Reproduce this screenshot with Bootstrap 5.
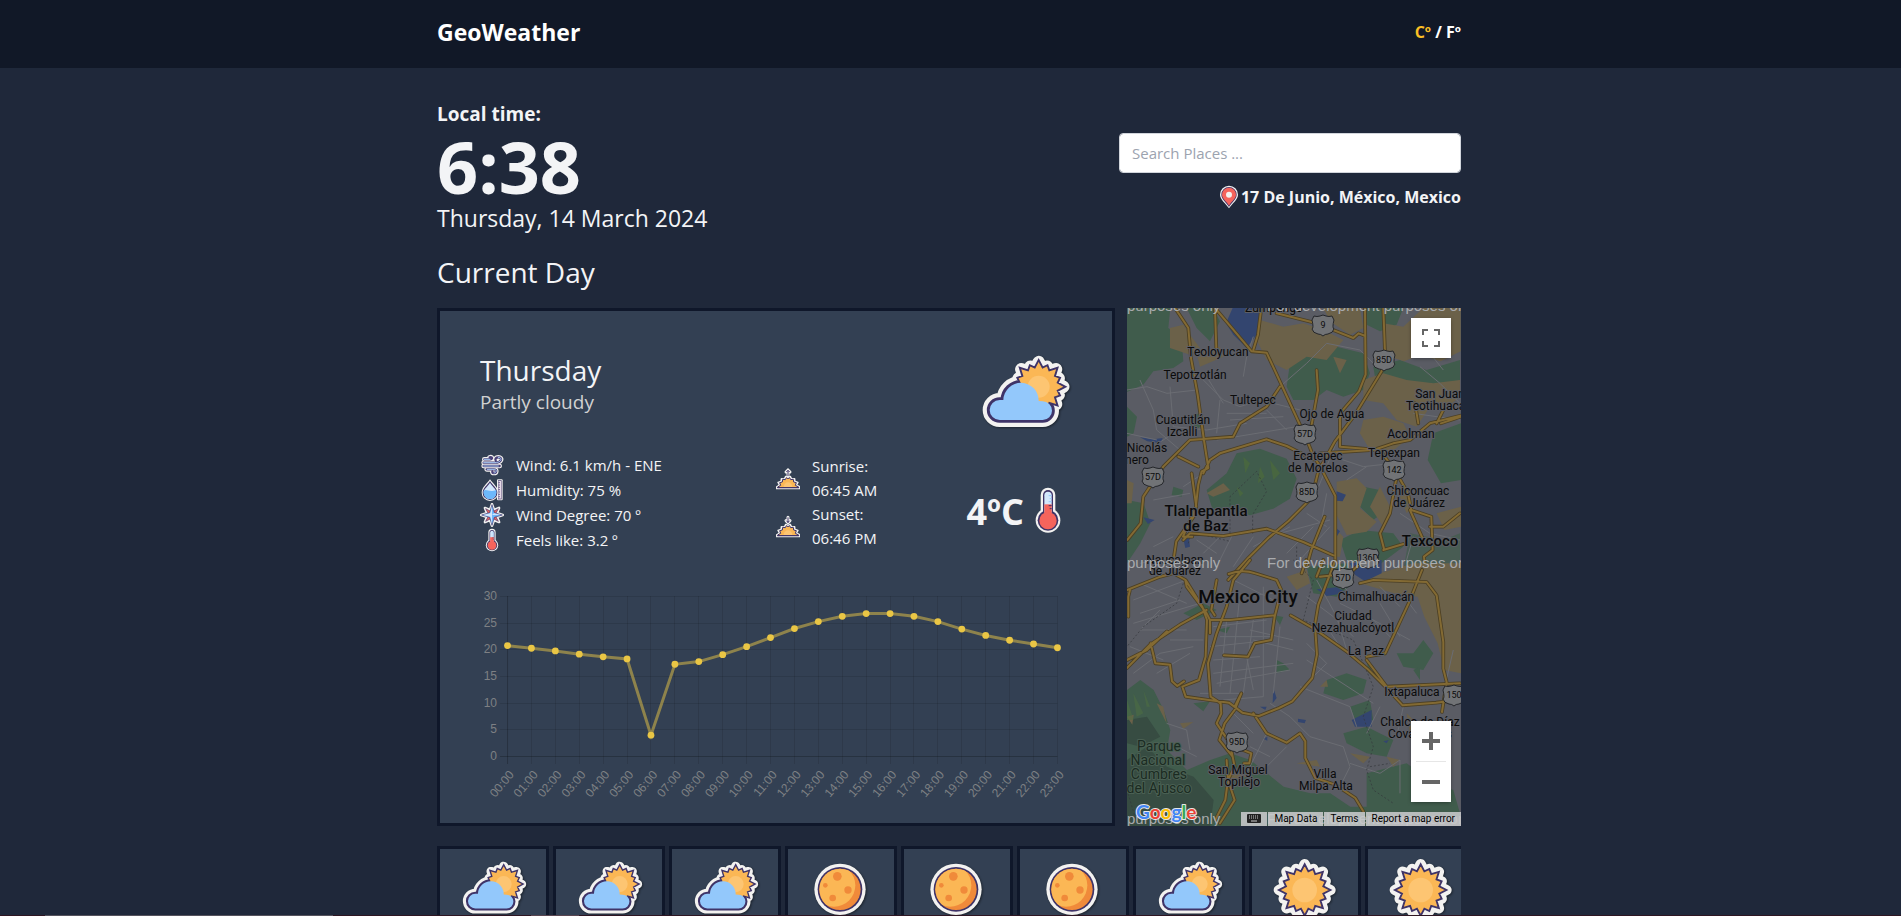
<!DOCTYPE html>
<html lang="en">
<head>
<meta charset="utf-8">
<meta name="viewport" content="width=device-width, initial-scale=1">
<title>GeoWeather</title>
<link href="https://cdn.jsdelivr.net/npm/bootstrap@5.3.0/dist/css/bootstrap.min.css" rel="stylesheet">
<style>
:root{--ink:#0f172a;--panel:#334053;--page:#1f283a;--snow:#f3f4f6}
html{scrollbar-width:none}
body{font-family:"Open Sans","Noto Sans",sans-serif;background:var(--page);color:var(--snow);line-height:24px;padding-right:3px;overflow-x:hidden}
.topbar{background:#111827;height:68px;margin-right:-3px;padding-right:3px}
.wrap{max-width:1024px;margin:0 auto}
.brand{font-size:23px;font-weight:700;color:#fff;text-decoration:none}
.unit{background:none;border:0;padding:0;color:#fff;font-weight:700;font-size:16px}
.unit.on{color:#fbbf24}
.lbl{font-size:19px;font-weight:700;line-height:28px;margin-bottom:2px}
.clock{font-size:72px;font-weight:700;line-height:72px}
.date{font-size:23px;line-height:32px}
.sec{font-size:28px;line-height:36px;font-weight:400;padding-bottom:2px}
.finder{flex:0 0 33.4%}
.finder .form-control{height:40px;border-radius:4px;border:1px solid #d1d5db;padding:8px 12px;font-size:15px}
.finder .form-control::placeholder{color:#9ca3af}
.place{font-weight:700;font-size:16px}
.i24{width:24px;height:24px;flex:none}
.main-grid{display:grid;grid-template-columns:67fr 33fr;gap:12px}
.panel{background:var(--panel);border:3px solid var(--ink)}
.today{padding:33px 40px 22px}
.today h2{font-size:28px;line-height:36px;font-weight:400;margin:0}
.sub{font-size:19px;line-height:28px;color:#d1d1d1}
.facts{font-size:15px;margin-top:12px}
.facts li{height:25px}
.temp{font-size:36px;font-weight:700}
.i48{width:48px;height:48px}
.i96{width:96px;height:96px}
.i70{width:70px;height:70px}
.stick{filter:drop-shadow(1px 1px 1px rgba(0,0,0,.45))}
.chart text{font:12px "Liberation Sans",Arial,sans-serif;fill:#7e8084}
.mapbox{min-height:518px}
.mapbox>svg{position:absolute;inset:0;width:100%;height:100%}
.mapbox text{font-family:Roboto,sans-serif;font-size:12px;fill:#0b0b0b;text-anchor:middle;paint-order:stroke;stroke:#5c5e66;stroke-width:2px;stroke-linejoin:round}
.mapbox text.big{font-size:15px;font-weight:500}
.mapbox text.city{font-size:19px;font-weight:500}
.mapbox text.park{font-size:14px;fill:#1b2b22;stroke:#4a6053}
.mapbox text.wm{font-family:"Liberation Sans",Arial,sans-serif;font-size:15px;fill:#a9abae;stroke:none;text-anchor:start}
.mapbox text.shd{font-size:9px;stroke:none}
.mapbox text.glogo{font-family:Lato,sans-serif;font-size:19px;font-weight:700;stroke:#e8e8e8;text-anchor:start}
.mapbtn{background:#fff;border:0;width:40px;height:40px;padding:0;display:flex;align-items:center;justify-content:center}
.shade{box-shadow:0 1px 4px -1px rgba(0,0,0,.5);border-radius:2px;background:#fff}
.ctl{margin:10px}
.ctl-zoom{margin:0 10px 24px}
.rule{width:30px;height:1px;background:#e6e6e6}
.attr{font:10px/14px Roboto,sans-serif;gap:1px}
.attr a,.attr button{background:rgba(200,202,204,.88);color:#000;text-decoration:none;border:0;padding:0 6px;height:14px}
.days{display:flex;gap:4px;overflow:hidden}
.day{flex:0 0 112px;padding:4px 0 12px;text-align:center}
.dock{height:1px;background:linear-gradient(90deg,#2f1622 45px,#55525c 45px 333px,#2f1622 333px 531px,#5a4650 531px 579px,#2f1622 579px)}
</style>
</head>
<body>
<svg width="0" height="0" class="position-absolute" aria-hidden="true">
<defs>
<path id="cloudShape" d="M721 270A30 30 0 0 1 721 210L732 210A53 53 0 0 1 838 213L850 214A28 28 0 0 1 850 270Z"/>
<path id="sunShape"/>
<symbol id="partly" viewBox="650 42 288 288">
 <g stroke="#f3f2f0" stroke-width="42" stroke-linejoin="round" fill="#f3f2f0"><use href="#cloudShape"/><use href="#sunShape" transform="translate(838 170) scale(.88)"/></g>
 <g stroke="#3f3468" stroke-width="17"><use href="#cloudShape"/><use href="#sunShape" transform="translate(838 170) scale(.88)" stroke-width="13"/></g>
 <use href="#sunShape" transform="translate(838 170) scale(.88)" fill="#fbb755"/><circle cx="838" cy="170" r="33" fill="#fdc572"/>
 <use href="#cloudShape" fill="#93c8fb"/>
</symbol>
<symbol id="sun" viewBox="0 0 210 210">
 <use href="#sunShape" transform="translate(104 111) scale(.92)" fill="#f3f2f0" stroke="#f3f2f0" stroke-width="34" stroke-linejoin="round"/>
 <use href="#sunShape" transform="translate(104 111) scale(.92)" fill="#fbb755" stroke="#3f3468" stroke-width="6"/>
 <circle cx="104" cy="111" r="37" fill="#fdc572"/>
</symbol>
<clipPath id="moonClip"><circle cx="102" cy="109" r="62"/></clipPath>
<symbol id="moon" viewBox="0 0 210 210">
 <circle cx="102" cy="109" r="77" fill="#f3f2f0"/><circle cx="102" cy="109" r="67" fill="#3f3468"/><circle cx="102" cy="109" r="62" fill="#f08a3a"/>
 <circle cx="84" cy="97" r="64" fill="#fbb755" clip-path="url(#moonClip)"/>
 <g fill="#f08a3a"><circle cx="94" cy="70" r="13"/><circle cx="58" cy="97" r="7"/><circle cx="126" cy="111" r="11"/><circle cx="80" cy="135" r="10"/></g>
</symbol>
<symbol id="thermo" viewBox="792 469 144 144">
 <g fill="#f3f2f0"><circle cx="864" cy="572" r="37"/><rect x="842" y="474" width="44" height="90" rx="22"/></g>
 <g fill="#3f3468"><circle cx="864" cy="572" r="31"/><rect x="849" y="481" width="30" height="80" rx="15"/></g>
 <rect x="853" y="486" width="22" height="70" rx="11" fill="#d3e7fb"/>
 <path d="M853 524h22v26h-22z" fill="#f5645c"/><circle cx="864" cy="573" r="26" fill="#f5645c"/>
 <path d="M866 498h9M869 507h6M866 516h9" stroke="#93c8fb" stroke-width="3"/><path d="M866 528h9M869 537h6" stroke="#3f3468" stroke-width="3"/>
</symbol>
<symbol id="pin" viewBox="481 553 72 72">
 <path d="M517 623C508 609 490 597 490 582a27 27 0 0 1 54 0C544 597 526 609 517 623Z" fill="#f3f2f0"/>
 <path d="M517 619C510 606 494 596 494 582a23 23 0 0 1 46 0C540 596 524 606 517 619Z" fill="#3f3468"/>
 <path d="M517 615C512 604 496 594 496 582a21 21 0 0 1 42 0C538 594 522 604 517 615Z" fill="#f5645c"/>
 <circle cx="517" cy="582" r="9" fill="#f3f2f0"/>
</symbol>
<symbol id="wind" viewBox="150 459 72 72">
 <g fill="none" stroke-linecap="round" stroke-linejoin="round">
 <g stroke="#f3f2f0" stroke-width="14"><path d="M161 488h34c20 0 24-16 10-16-8 0-10 5-8 9M163 478h17c9 0 7-9-1-6M161 498h48M170 508h22c10 0 8 11 0 11-3 0-5-2-5-4"/></g>
 <g stroke="#4a4076" stroke-width="7"><path d="M161 488h34c20 0 24-16 10-16-8 0-10 5-8 9M163 478h17c9 0 7-9-1-6M161 498h48M170 508h22c10 0 8 11 0 11-3 0-5-2-5-4"/></g>
 <g stroke="#a9cdf8" stroke-width="3"><path d="M161 488h34c20 0 24-16 10-16M163 478h17M161 498h44M172 508h20c10 0 8 11 0 11"/></g></g>
</symbol>
<symbol id="humid" viewBox="150 536 72 72">
 <rect x="201" y="540" width="17" height="63" rx="3" fill="#f3f2f0"/><rect x="204" y="543" width="11" height="57" fill="#3f3468"/><path d="M205 545h9v53h-9z" fill="#e6d9e8"/><path d="M205 550h5M205 557h5M205 564h5M205 571h5M205 578h5M205 585h5M205 592h5" stroke="#3f3468" stroke-width="2"/>
 <path d="M180 540C172 552 155 564 155 580a25 25 0 0 0 50 0C205 564 188 552 180 540Z" fill="#f3f2f0"/>
 <path d="M180 545C173 556 158 567 158 580a22 22 0 0 0 44 0C202 567 187 556 180 545Z" fill="#3f3468"/>
 <path d="M180 550C174 560 161 569 161 580a19 19 0 0 0 38 0C199 569 186 560 180 550Z" fill="#d3e7fb"/>
 <path d="M161 574c10-6 16 6 38-2v8a19 19 0 0 1-38 0Z" fill="#6db8fb"/>
</symbol>
<symbol id="compass" viewBox="150 610 72 72">
 <g stroke-linejoin="round"><path d="M165 625l15 6 6-17 6 17 15-6-6 15 17 6-17 6 6 15-15-6-6 17-6-17-15 6 6-15-17-6 17-6Z" fill="#f3f2f0" stroke="#f3f2f0" stroke-width="8"/>
 <path d="M167 627l15 8h8l15-8-8 15v8l8 15-15-8h-8l-15 8 8-15v-8Z" fill="#f5645c" stroke="#3f3468" stroke-width="2"/>
 <path d="M186 615l7 24 24 7-24 7-7 24-7-24-24-7 24-7Z" fill="#6db8fb" stroke="#3f3468" stroke-width="2"/><path d="M186 619v54l-5-22-22-5 22-5ZM186 646h27l-21-5Z" fill="#d3e7fb"/></g>
</symbol>
<g id="horizon">
 <path d="M50 474l9-6-4-8 9-3 1-8 9 1 4-8 7 4 7-4 4 8 9-1 1 8 9 3-4 8 11 6v5H50Z" fill="#f3f2f0" stroke="#f3f2f0" stroke-width="4" stroke-linejoin="round"/>
 <path d="M54 474l9-5-3-8 8-2 1-8 8 1 3-6 5 3 5-3 3 6 8-1 1 8 8 2-3 8 10 5v2H54Z" fill="#fbb755" stroke="#3f3468" stroke-width="3" stroke-linejoin="round"/>
 <path d="M72 474a13 14 0 0 1 26 0Z" fill="#fdc572"/><path d="M53 476h65" stroke="#3f3468" stroke-width="3"/>
</g>
<symbol id="sunrise" viewBox="49 411 72 72"><use href="#horizon"/><path d="M85 441v-17M79 429l6-6 6 6" fill="none" stroke="#f3f2f0" stroke-width="9" stroke-linecap="round"/><path d="M85 441v-17M80 429l5-5 5 5" fill="none" stroke="#3f3468" stroke-width="3"/></symbol>
<symbol id="sunset" viewBox="49 411 72 72"><use href="#horizon"/><path d="M85 438v-17M79 431l6 6 6-6" fill="none" stroke="#f3f2f0" stroke-width="9" stroke-linecap="round"/><path d="M85 438v-17M80 431l5 5 5-5" fill="none" stroke="#3f3468" stroke-width="3"/></symbol>
<path id="shield" d="M-9-9q3 1 6 0l3-1 3 1q3 1 6 0l2 4q-2 8 0 9-1 4-6 5-3 0-5 2-2-2-5-2-5-1-6-5 2-1 0-9Z" fill="#717376" stroke="#24262a" stroke-width="1"/>
</defs>
</svg>

<nav class="topbar navbar py-0">
 <div class="wrap w-100 d-flex justify-content-between align-items-center pb-1">
  <a class="brand" href="#">GeoWeather</a>
  <div class="fw-bold text-white"><button class="unit on" type="button">Cº</button> / <button class="unit" type="button">Fº</button></div>
 </div>
</nav>

<main class="wrap">
 <header class="d-flex justify-content-between pt-4">
  <div class="mt-2">
   <div class="lbl">Local time:</div>
   <div class="clock">6:38</div>
   <div class="date">Thursday, 14 March 2024</div>
  </div>
  <div class="finder d-flex flex-column justify-content-center pt-3">
   <label class="visually-hidden" for="q">Search places</label>
   <input id="q" class="form-control" type="text" placeholder="Search Places ...">
   <div class="place d-flex justify-content-end align-items-center mt-2 pt-1"><svg class="i24"><use href="#pin"/></svg><span>17 De Junio, México, Mexico</span></div>
  </div>
 </header>
 <h1 class="sec mt-3 mb-3 pt-1">Current Day</h1>

 <div class="main-grid">
  <section class="panel today">
   <div class="d-flex justify-content-between align-items-center">
    <div class="pb-3"><h2>Thursday</h2><div class="sub">Partly cloudy</div></div>
    <svg class="i96 stick"><use href="#partly"/></svg>
   </div>
   <div class="row g-0 align-items-center facts">
    <div class="col-6">
     <ul class="list-unstyled m-0">
      <li class="d-flex align-items-center"><svg class="i24 me-2"><use href="#wind"/></svg><span class="ms-1">Wind: 6.1 km/h - ENE</span></li>
      <li class="d-flex align-items-center"><svg class="i24 me-2"><use href="#humid"/></svg><span class="ms-1">Humidity: 75 %</span></li>
      <li class="d-flex align-items-center"><svg class="i24 me-2"><use href="#compass"/></svg><span class="ms-1">Wind Degree: 70 º</span></li>
      <li class="d-flex align-items-center"><svg class="i24 me-2"><use href="#thermo"/></svg><span class="ms-1">Feels like: 3.2 º</span></li>
     </ul>
    </div>
    <div class="col-6 d-flex justify-content-between align-items-center">
     <div>
      <div class="d-flex align-items-center"><svg class="i24 me-2"><use href="#sunrise"/></svg><div class="ms-1">Sunrise:<br>06:45 AM</div></div>
      <div class="d-flex align-items-center"><svg class="i24 me-2"><use href="#sunset"/></svg><div class="ms-1">Sunset:<br>06:46 PM</div></div>
     </div>
     <div class="temp d-flex align-items-center pt-3"><span class="pt-1">4ºC</span><svg class="i48"><use href="#thermo"/></svg></div>
    </div>
   </div>
   <svg class="chart d-block w-100 mt-4" viewBox="0 0 592 224" role="img" aria-label="Temperature by hour" id="chart"></svg>
  </section>

  <section class="mapbox position-relative overflow-hidden">
   <svg viewBox="0 0 334 518" preserveAspectRatio="xMidYMid slice">
    <rect width="334" height="518" fill="#5a5c64"/>
    <!-- northern half -->
    <g transform="translate(-7 -8) scale(.33333)">
     <g fill="#405c4c">
      <path d="M21 24h130l-6 60 40 30 5 70-30 20-60 10-30 40-49 22Z"/><path d="M200 24h80l20 40-30 60-40-40Z"/><path d="M510 190l60-30 50 10 30-30 80 20 20 60-20 50-60 20-50-20-40 30-60 0-20-40Z"/><path d="M740 24h110l-20 50-50 20-40-20Z"/>
      <path d="M760 200l80-20 80 30 100-30v60l-60 20-60-10-60 30-70-20Z"/><path d="M940 400l83-30v170l-60 10-40-70Z"/><path d="M260 570l60-50 30-60 70-14 80 30 30 60-20 60-50 30-70 20-60-20-50 10Z"/>
      <path d="M21 600l50 10 20 60-30 60-40 60Z"/><path d="M21 320l30 30-10 50-20 10Z"/><path d="M730 560l50 10 20 60-40 30-40-40ZM660 720l60-30 100 10 30 40-80 60-90-20Z"/><path d="M200 350l40-10 10 30-30 30ZM160 560l30 10-5 20-30-5Z"/><path d="M870 700l100 20 50-20v110H850Z" opacity=".7"/>
     </g>
     <g fill="#6b6149">
      <path d="M150 84l40-10 20 30 30 40-30 20-60-20Z"/><path d="M420 60l70 20 60-10 60 20 60 30-50 60-60-10-60 40-60-30-30-60Z"/><path d="M610 24h110l10 60-40 20-60-40Z"/><path d="M790 70l60 10 60-56h112v130l-60 30-60-20-50 20-60-20Z"/><path d="M730 240l60-20 70 20 80 10 80-10v50l-50 40-40-10-40 60-60-20-40-50-60-10Z"/>
      <path d="M730 360l60-10 60 20 20 40-60 50-60-10-30-50Z"/><path d="M650 545l60-10 30 30-20 60 50 40-30 30-60 10-30-60Z"/><path d="M780 560l30 60-20 60-40-60ZM650 690l20 20-10 60-15 0ZM640 170l40 10-20 40ZM230 160l70-20 10 30-70 30ZM260 580l50-30 20 20-50 20ZM21 540l20 10-6 60-14 0Z"/><path d="M860 560l20 60-20 20-20-50ZM950 640l73-20v60l-50 10Z"/>
     </g>
     <path d="M318 70l20-46h86l-14 80-30 40-40-40Z" fill="#33456f"/><g fill="#33456f"><path d="M60 412l40 6 28-4-6 16-40-6ZM70 652l34 8-20 12ZM190 716l16-6 4 30-14 4ZM650 574l28 10-10 20-20-2ZM648 684l12 10-10 16Z"/></g>
     <path d="M370 470l20 20-14 30ZM420 500l14 30-20 20ZM450 480l30 40-20 20ZM350 560l20 20-10 10Z" fill="#486640"/>
     <path fill="none" stroke="#6a6c72" stroke-width="3" d="M21 270l60-10 60 20 90-10M250 240l60 60 50 20 60-20 120 30M370 230l10-60 20-60M480 260l80-70 60-60 100 20 60 60M60 240l40 90 10 60 70 60M150 260l10 120 100 10 120-20M300 300l-10 100M330 360l160-10M440 330l60 60M290 420l240-40M320 340h120M260 230l50 80M100 440l60-40M21 400l90 20M190 560l60-40M100 600l110-20M640 470l90 30 90-10M680 540l60-40M660 400l-80 200M620 580l-20 110M560 640l60 40M480 700l150-40M500 760l80-80M540 780l90-100M400 740l110-60M250 760l60-60M300 780l40-80M340 800l60-90M230 720l60 40M100 740l60-30M60 790l100-20M900 200l60 50 60 60M880 340l140 20M840 640l90 60 90 20M860 780l20-70M930 160l40 50"/>
     <path d="M330 700v-110l80-76 30 60-42 70v60M205 730l10-34 115 28M530 740v60" fill="none" stroke="#33363b" stroke-width="2" stroke-dasharray="6 6"/>
     <g fill="none" stroke-linejoin="round" stroke-linecap="round">
      <path id="rn" stroke="#4b3f24" stroke-width="11" d="M165 24l40 60 8 90 20 110 18 130 14 90-20 10-10 40-10 90-56 80-10 66M215 520l14 100-40 90 28 0M285 24l110 130 45 4 60 130 60 130 20 50 20 30 46 90v210M285 24l4 120M424 24l-10 80-14 46M470 40l120 30 110 44 16-14 20 8M735 24l2 200-20 50-60 70M790 24l5 130-10 60-80 130-60 80-50 90-20 80-70 70-60 50-60 60-60 66M590 210l4 60-20 110M480 260l-40 60-80 50-20 40-130 10-80 80-60 90-8 80-40 50M175 470l60 30M250 520l20-40 30-20 140-42 60 20 80 40M660 350v90l120 10 50 70 34 60 10 50 60 20 4 100-26 20 6 60M600 460l160-10 60-20 50-10 60-50 96-24M830 530l-20 110-30 60 12 46M870 630l40 90M930 680l40 0 50-40M790 750l60-18M190 720l20-20 100 8 130-22 110 40 90 40M614 650l-40 100-14 50M885 310l10 60M970 330l-20 40M1023 350l-60 20"/>
     </g>
    </g>
    <!-- southern half -->
    <g transform="translate(-7 252) scale(.33333)">
     <g fill="#405c4c">
      <path d="M21 390l40-30 40 30 30 60 20 60-10 60 60 60 70-30 60-20 60 20 100 80 80 20 60 0 60 40 70 0 60 58H21Z"/><path d="M620 360l60-20 60 20-10 40-60 20-60-20Z"/><path d="M690 440l60-20 10 60-50 10Z"/><path d="M670 520l70-20 80 40-20 50-60-10-60-30Z"/><path d="M830 280l50 0 30-40 30 40-30 50-60-10Z"/><path d="M560 20l120-10 20 60-50 40-70-10ZM190 160l60-30 40 20-60 30ZM470 300l20 10 20 20-40 10ZM220 430l50-6-20 30ZM290 210l40-10-10 20ZM740 640l120-30 80 60 60 20 23 80H740ZM460 165l30 6-10 24ZM740 300l20 20-14 20ZM880 330l20-10 0 40Z"/>
     </g>
     <path d="M21 600l60-40 60 60 80 30 60 70-10 78H21ZM21 480l60-10 40 60-60 30-40-10Z" fill="#374c42"/>
     <g fill="#6b6149"><path d="M720 70l60-30 100-30h143v330l-50-10-20-80-40-80-20-60-70-10Z"/><path d="M110 430l20 10 10 50-20-40ZM180 490l40-4-30 20ZM800 590l40 10-20 20ZM690 580l60 10-20 20ZM600 380l20-20 4 20ZM500 50l60-20 10 40-40 20ZM310 650l60-20 10 20-60 20ZM21 470l20-6-4 30ZM860 460l20 20-10 40ZM530 610l60-10 10 20Z"/></g>
     <g fill="#33456f"><path d="M690 10l95-10v40l-50 24-30-20ZM590 88l60-6 30 16-60 10ZM695 480l60-30 0 50-50 0ZM534 476l24 4-4 10-20-4ZM460 384l10 30-12 16ZM430 536l12-6v12ZM790 544l16-4-6 10ZM420 440h20l-4 10Z"/></g>
     <g fill="#4d6d42" opacity=".6"><path d="M40 400l30 60-20 10ZM70 390l20 50-10 0ZM21 420l20 60-20 0Z"/></g>
     <path fill="none" stroke="#6a6c72" stroke-width="3" d="M280 200l160-20M300 230h160M270 260l190-20M280 300l140-10M280 340l240-30M290 370l220-40M320 180l-20 200M360 100l-30 300M400 180l-30 220M430 80l0 330M480 200l-20 200M340 60l120 60M350 110l110-10M60 70l140 60M40 120l160-60M60 160l120-40M40 340l80-60 100-20M60 210l140 0M110 340l100-60M150 240l100 0M30 260l100 40M40 190l200-60M120 150l-60 60M560 110l80 60 60 60M590 60l60 110 30 100M620 200l40 60M660 130l100 50 60 60M780 130l60 100M560 250l60 60-60 60M560 300l200 130M540 380l150 60 20 60M450 430l60 40 60 60 100 30 20 60-30 60M340 460l60 60M140 490l60 20 10 60M170 560l60 30M780 440l-40 80M850 440l-20 90M690 610l90 30 60-40 0 100M500 560l-60 60M440 520l-60 120M780 80l60 60M860 120l30 40M640 30l60 90M760 180l110 60M1000 270l-30 130M390 560l60 30M240 400l120 0M310 420l120-10M390 210l130 30M400 240l120 30M380 290l20 100"/>
     <path d="M190 70l-20 60-100 70-49 60M520 0l60 60-30 120 150 60 60 140-30 90 30 90-20 70 20 60 60 40M21 690l30 100M750 620l60-10" fill="none" stroke="#33363b" stroke-width="2" stroke-dasharray="6 6"/>
     <g fill="none" stroke-linejoin="round" stroke-linecap="round">
      <path id="rs" stroke="#4b3f24" stroke-width="11" d="M21 90l100-40 40-10 36 20 50 80 14 40-4 110-20 70-50 20 10 30 70 10 60 8 40 30 50 10 60-24 40-20 60-70 14-70-6-90 10-60 50-130M390 0l-50 60-20 80-30 80-26 90 8 100 30 20 2 30-14 30 40 60 14 70-20 40-8 60-30 60M326 42q40-16 80-2l64 20 14 30-20 80-10 70-50 10-20 40-72-4M196 60l4 20 60 80 10 20 60 0 134-14M290 60l-16 90 10 16M260 150l-80 44-90 60-69 70M21 300l60-30 60-56M92 250l14 60 44 4 6 50 16 14 20-14M30 90l-5 20 0 60M364 400l-20 50-30 40-16 50 40 50M400 460l40 60 60 28 40-28 16 24 0 50 30 60 60 20 60 40 24 40M512 166l70 40 100 70 60 50 50 50 56 60 100-8 80-10M740 300l60 80 220-10M906 30l-40 100-70 150-56 10M720 70l40-10 160 6 30 40 20 140 0 80 10 40-14 90M270 180v40M545 40l14-40M590 50l20-50M600 50l90-10 30-30M344 560l50 20-6 30-16 0M320 600l4 60 20 60-44 70M344 440l20-40"/>
     </g>
    </g>
    <g id="shields"></g>
    <text x="147" y="4">Zumpango</text><text x="91" y="48">Teoloyucan</text><text x="68" y="71">Tepotzotlán</text><text x="126" y="96">Tultepec</text>
    <text x="205" y="110">Ojo de Agua</text><text x="56" y="116">Cuautitlán</text><text x="55" y="128">Izcalli</text><text x="20" y="144">Nicolás</text><text x="10" y="156">nero</text>
    <text x="313" y="90">San Juan</text><text x="312" y="102">Teotihuacán</text><text x="284" y="130">Acolman</text><text x="267" y="149">Tepexpan</text>
    <text x="191" y="152">Ecatepec</text><text x="191" y="164">de Morelos</text><text x="291" y="187">Chiconcuac</text><text x="292" y="199">de Juárez</text>
    <text class="big" x="79" y="208">Tlalnepantla</text><text class="big" x="79" y="223">de Baz</text><text class="big" x="303" y="238">Texcoco</text>
    <text x="48" y="256">Naucalpan</text><text x="48" y="267">de Juárez</text><text class="city" x="121" y="295">Mexico City</text>
    <text x="249" y="293">Chimalhuacán</text><text x="226" y="312">Ciudad</text><text x="226" y="324">Nezahualcóyotl</text><text x="239" y="347">La Paz</text>
    <text x="285" y="388">Ixtapaluca</text><text x="293" y="418">Chalco de Díaz</text><text x="293" y="430">Covarrubias</text>
    <text class="park" x="32" y="443">Parque</text><text class="park" x="31" y="457">Nacional</text><text class="park" x="32" y="471">Cumbres</text><text class="park" x="32" y="485">del Ajusco</text>
    <text x="111" y="466">San Miguel</text><text x="112" y="478">Topilejo</text><text x="198" y="470">Villa</text><text x="199" y="482">Milpa Alta</text>
    <g><text class="wm" x="0" y="3">purposes only</text><text class="wm" x="140" y="3">For development purposes only</text><text class="wm" x="0" y="260">purposes only</text><text class="wm" x="140" y="260">For development purposes only</text><text class="wm" x="0" y="516">purposes only</text><text class="wm" x="140" y="516">For development purposes only</text></g>
    <text class="glogo" x="9" y="511"><tspan fill="#4285f4">G</tspan><tspan fill="#ea4335">o</tspan><tspan fill="#fbbc05">o</tspan><tspan fill="#4285f4">g</tspan><tspan fill="#34a853">l</tspan><tspan fill="#ea4335">e</tspan></text>
   </svg>
   <div class="position-absolute top-0 end-0 shade ctl"><button class="mapbtn" type="button" aria-label="Toggle fullscreen"><svg width="18" height="18" fill="none" stroke="#666" stroke-width="2"><path d="M1 6V1h5M12 1h5v5M17 12v5h-5M6 17H1v-5"/></svg></button></div>
   <div class="position-absolute bottom-0 end-0 shade ctl-zoom">
    <button class="mapbtn" type="button" aria-label="Zoom in"><svg width="18" height="18" fill="#666"><path d="M7 0h4v7h7v4h-7v7H7v-7H0V7h7z"/></svg></button>
    <div class="mx-auto rule"></div>
    <button class="mapbtn" type="button" aria-label="Zoom out"><svg width="18" height="18" fill="#666"><path d="M0 7h18v4H0z"/></svg></button>
   </div>
   <div class="attr position-absolute bottom-0 end-0 d-flex">
    <button type="button" aria-label="Keyboard shortcuts"><svg class="d-block" width="14" height="10"><rect width="14" height="9" rx="1" fill="#222"/><path d="M2 2h10M2 4h10" stroke="#ccc" stroke-dasharray="1 1"/><path d="M4 7h6" stroke="#ccc"/></svg></button>
    <a href="#">Map Data</a><a href="#">Terms</a><a href="#">Report a map error</a>
   </div>
  </section>
 </div>

 <div class="days mt-3 pt-1" id="days"></div>
</main>
<div class="dock fixed-bottom"></div>

<script src="https://cdn.jsdelivr.net/npm/bootstrap@5.3.0/dist/js/bootstrap.bundle.min.js"></script>
<script>
// sixteen-spike sun outline, long and short spikes alternating
let d='';
for(let i=0;i<32;i++){const r=i%2?62:(i%4?74:84),a=i*Math.PI/16-Math.PI/2;d+=(i?'L':'M')+(r*Math.cos(a)).toFixed(1)+' '+(r*Math.sin(a)).toFixed(1)}
document.getElementById('sunShape').setAttribute('d',d+'Z');

// hourly temperature chart
const temps=[20.7,20.2,19.7,19.1,18.6,18.2,3.9,17.2,17.7,19,20.5,22.2,23.9,25.2,26.2,26.7,26.7,26.2,25.2,23.8,22.6,21.7,21,20.3];
const X=i=>27.5+i*23.91,Y=v=>180-v*5.333;let s='';
for(let v=0;v<=30;v+=5)s+=`<path d="M20 ${Math.round(Y(v))+.5}H${X(23)}" stroke="#000" stroke-opacity="${v?.1:.22}"/><text x="17" y="${Math.round(Y(v))+4}" text-anchor="end">${v}</text>`;
temps.forEach((t,i)=>{s+=`<path d="M${Math.round(X(i)-.5)+.5} 20V188" stroke="#000" stroke-opacity="${i?.1:.22}"/><text transform="translate(${X(i)+7} 199) rotate(-50)" text-anchor="end">${String(i).padStart(2,'0')}:00</text>`});
s+=`<polyline fill="none" stroke="#eac645" stroke-opacity=".5" stroke-width="3" points="${temps.map((t,i)=>X(i)+','+Y(t)).join(' ')}"/>`;
temps.forEach((t,i)=>s+=`<circle cx="${X(i)}" cy="${Y(t)}" r="3.4" fill="#eac645"/>`);
document.getElementById('chart').innerHTML=s;

// second, thinner pass paints the road surface over its casing
for(const id of['rn','rs']){const p=document.getElementById(id),c=p.cloneNode();c.removeAttribute('id');c.setAttribute('stroke','#836a33');c.setAttribute('stroke-width',6);p.parentNode.appendChild(c)}

document.getElementById('shields').innerHTML=[[196,17,'9'],[257,52,'85D'],[178,126,'57D'],[26,169,'57D'],[180,184,'85D'],[267,162,'142'],[241,250,'136D'],[216,270,'57D'],[110,434,'95D'],[327,387,'150']].map(([x,y,t])=>`<use href="#shield" x="${x}" y="${y}"/><text class="shd" x="${x}" y="${y+3}">${t}</text>`).join('');

document.getElementById('days').innerHTML=['partly','partly','partly','moon','moon','moon','partly','sun','sun'].map(n=>`<div class="panel day"><svg class="i70 stick"><use href="#${n}"/></svg></div>`).join('');
</script>
</body>
</html>
